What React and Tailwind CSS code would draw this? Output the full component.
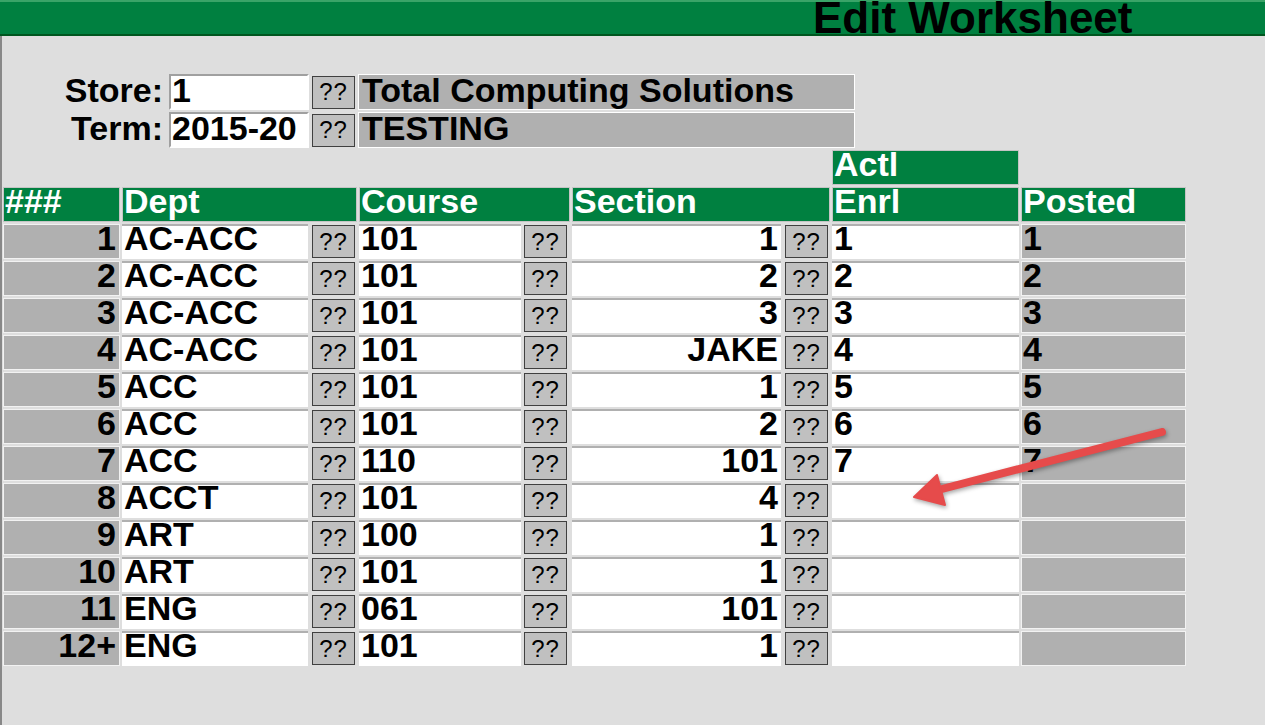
import React from "react";

const rows = [
  ["1", "AC-ACC", "101", "1", "1", "1"],
  ["2", "AC-ACC", "101", "2", "2", "2"],
  ["3", "AC-ACC", "101", "3", "3", "3"],
  ["4", "AC-ACC", "101", "JAKE", "4", "4"],
  ["5", "ACC", "101", "1", "5", "5"],
  ["6", "ACC", "101", "2", "6", "6"],
  ["7", "ACC", "110", "101", "7", "7"],
  ["8", "ACCT", "101", "4", "", ""],
  ["9", "ART", "100", "1", "", ""],
  ["10", "ART", "101", "1", "", ""],
  ["11", "ENG", "061", "101", "", ""],
  ["12+", "ENG", "101", "1", "", ""],
];

function Btn({ className = "" }) {
  return (
    <div
      className={
        "w-[43px] h-[33px] self-center shrink-0 bg-[#c0c0c0] border border-[#404040] flex items-center justify-center text-[24px] font-normal leading-none tracking-[1px] text-black " +
        className
      }
    >
      ??
    </div>
  );
}

function Head({ children }) {
  return (
    <div className="h-[35px] bg-[#008040] border border-[#c4c4c4] text-white font-bold pl-[1px] leading-[26px] whitespace-nowrap">
      {children}
    </div>
  );
}

export default function App() {
  return (
    <div
      className="relative w-[1265px] h-[725px] overflow-hidden flex flex-col text-[34px] text-black"
      style={{ fontFamily: '"Liberation Sans", Arial, sans-serif' }}
    >
      {/* Title bar */}
      <div className="h-[36px] shrink-0 bg-[#008040] border-t-2 border-t-[#3aa468] border-b-2 border-b-[#00561f] pl-[813px]">
        <div className="text-[44px] font-bold leading-[32px] whitespace-nowrap text-black">
          Edit Worksheet
        </div>
      </div>

      {/* Body */}
      <div className="flex-1 bg-[#dedede] border-l-2 border-[#888888] pt-[38px] font-bold">
        {/* Store / Term */}
        <div className="flex flex-col gap-[2px] ml-[1px]">
          {[
            ["Store:", "1", "Total Computing Solutions"],
            ["Term:", "2015-20", "TESTING"],
          ].map(([label, val, name]) => (
            <div key={label} className="flex h-[36px]">
              <div className="w-[162px] text-right pr-[2px] leading-[32px] whitespace-nowrap">
                {label}
              </div>
              <div className="ml-[4px] w-[140px] h-full bg-white border-2 border-t-[#a0a0a0] border-l-[#a0a0a0] border-r-white border-b-white pl-[1px] leading-[28px] whitespace-nowrap">
                {val}
              </div>
              <Btn className="ml-[3px]" />
              <div className="ml-[3px] w-[497px] h-full bg-[#b0b0b0] border border-white pl-[3px] leading-[30px] whitespace-nowrap">
                {name}
              </div>
            </div>
          ))}
        </div>

        {/* Table */}
        <div className="mt-[2px] ml-[1px] grid grid-cols-[117px_235px_211px_258px_187px_165px] gap-[2px] w-max">
          <div className="col-span-4 h-[35px]" />
          <Head>Actl</Head>
          <div />

          <Head>###</Head>
          <Head>Dept</Head>
          <Head>Course</Head>
          <Head>Section</Head>
          <Head>Enrl</Head>
          <Head>Posted</Head>

          {rows.map(([n, dept, course, section, enrl, posted]) => (
            <React.Fragment key={n}>
              <div className="h-[35px] bg-[#b0b0b0] border border-[#f2f2f2] text-right pr-[3px] leading-[26px] whitespace-nowrap">
                {n}
              </div>
              <div className="h-[35px] flex">
                <div className="flex-1 h-full bg-white border-t-2 border-[#b0b0b0] pl-[2px] leading-[24px] whitespace-nowrap">
                  {dept}
                </div>
                <Btn className="ml-[4px] mr-[2px]" />
              </div>
              <div className="h-[35px] flex">
                <div className="flex-1 h-full bg-white border-t-2 border-[#b0b0b0] pl-[2px] leading-[24px] whitespace-nowrap">
                  {course}
                </div>
                <Btn className="ml-[3px] mr-[3px]" />
              </div>
              <div className="h-[35px] flex">
                <div className="flex-1 h-full bg-white border-t-2 border-[#b0b0b0] pr-[3px] text-right leading-[24px] whitespace-nowrap">
                  {section}
                </div>
                <Btn className="ml-[4px] mr-[2px]" />
              </div>
              <div className="h-[35px] bg-white border-t-2 border-[#b0b0b0] pl-[2px] leading-[24px] whitespace-nowrap">
                {enrl}
              </div>
              <div className="h-[35px] bg-[#b0b0b0] border border-[#f2f2f2] pl-[1px] leading-[26px] whitespace-nowrap">
                {posted}
              </div>
            </React.Fragment>
          ))}
        </div>
      </div>

      {/* Annotation arrow */}
      <svg
        className="absolute inset-0 pointer-events-none"
        width="1265"
        height="725"
        viewBox="0 0 1265 725"
        style={{ filter: "drop-shadow(1px 2px 2px rgba(0,0,0,0.35))" }}
      >
        <line
          x1="1162"
          y1="432"
          x2="938"
          y2="490"
          stroke="#e64b4b"
          strokeWidth="8"
          strokeLinecap="round"
        />
        <polygon points="914,497 937,475 945,505" fill="#e64b4b" stroke="#e64b4b" strokeWidth="2" strokeLinejoin="round" />
      </svg>
    </div>
  );
}
